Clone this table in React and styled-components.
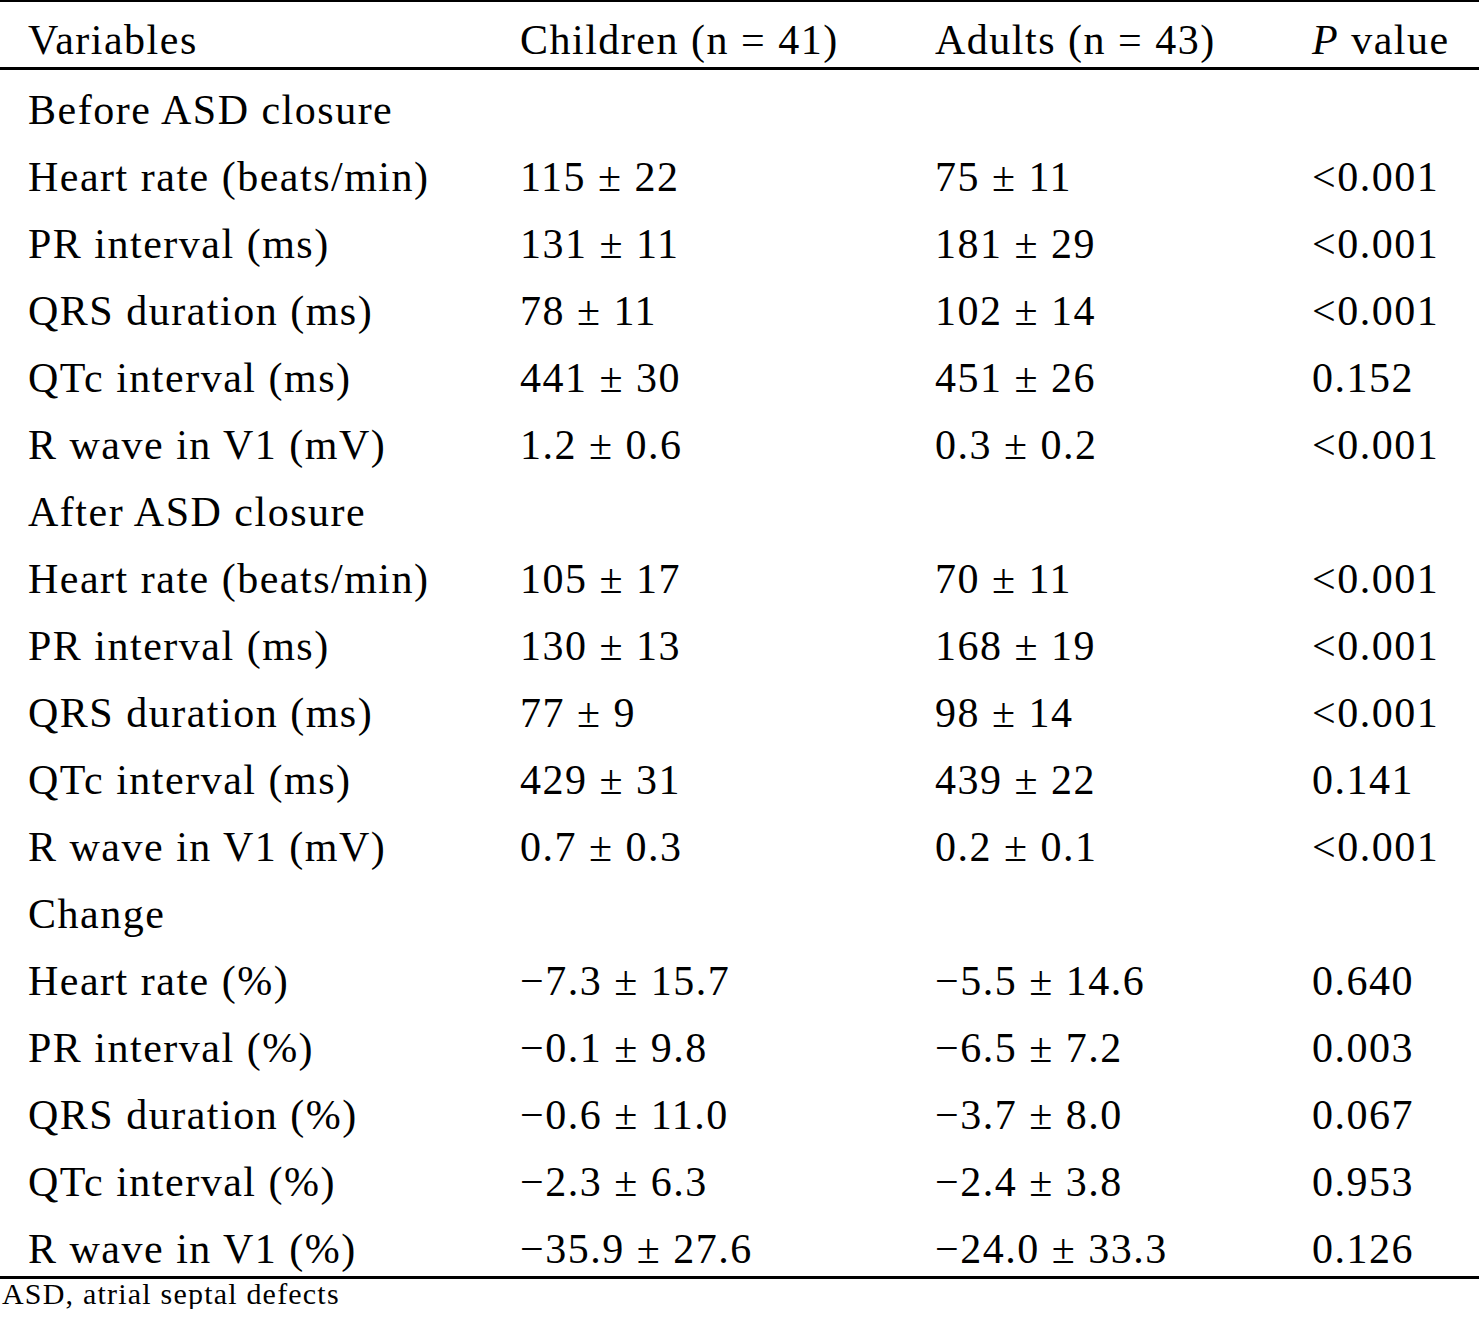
import React from "react";
import styled, { createGlobalStyle } from "styled-components";

const GlobalStyle = createGlobalStyle`
  html, body {
    margin: 0;
    padding: 0;
    background: #fff;
  }
  body {
    font-family: "Liberation Serif", "Times New Roman", serif;
    color: #000;
  }
`;

const Table = styled.div`
  width: 1479px;
  display: grid;
  grid-template-columns: 520px 415px 377px 1fr;
  font-size: 42px;
  letter-spacing: 1.5px;
`;

const HeadRow = styled.div`
  display: contents;
`;

const HeadCell = styled.div`
  border-top: 2px solid #000;
  border-bottom: 3px solid #000;
  padding: 11px 0 0 ${(p) => (p.first ? "28px" : "0")};
  line-height: 54px;
  white-space: nowrap;
`;

const Cell = styled.div`
  box-sizing: border-box;
  padding: 13px 0 0 ${(p) => (p.first ? "28px" : "0")};
  line-height: 54px;
  white-space: nowrap;
  border-bottom: ${(p) => (p.last ? "3px solid #000" : "none")};
  height: ${(p) => (p.last ? "70px" : "67px")};
`;

const Section = styled.div`
  grid-column: 1 / -1;
  height: 67px;
  box-sizing: border-box;
  padding: 13px 0 0 28px;
  line-height: 54px;
`;

const Footnote = styled.div`
  font-size: 30px;
  letter-spacing: 1.2px;
  line-height: 30px;
  padding-left: 2px;
`;

const sections = [
  {
    title: "Before ASD closure",
    rows: [
      ["Heart rate (beats/min)", "115 ± 22", "75 ± 11", "<0.001"],
      ["PR interval (ms)", "131 ± 11", "181 ± 29", "<0.001"],
      ["QRS duration (ms)", "78 ± 11", "102 ± 14", "<0.001"],
      ["QTc interval (ms)", "441 ± 30", "451 ± 26", "0.152"],
      ["R wave in V1 (mV)", "1.2 ± 0.6", "0.3 ± 0.2", "<0.001"],
    ],
  },
  {
    title: "After ASD closure",
    rows: [
      ["Heart rate (beats/min)", "105 ± 17", "70 ± 11", "<0.001"],
      ["PR interval (ms)", "130 ± 13", "168 ± 19", "<0.001"],
      ["QRS duration (ms)", "77 ± 9", "98 ± 14", "<0.001"],
      ["QTc interval (ms)", "429 ± 31", "439 ± 22", "0.141"],
      ["R wave in V1 (mV)", "0.7 ± 0.3", "0.2 ± 0.1", "<0.001"],
    ],
  },
  {
    title: "Change",
    rows: [
      ["Heart rate (%)", "−7.3 ± 15.7", "−5.5 ± 14.6", "0.640"],
      ["PR interval (%)", "−0.1 ± 9.8", "−6.5 ± 7.2", "0.003"],
      ["QRS duration (%)", "−0.6 ± 11.0", "−3.7 ± 8.0", "0.067"],
      ["QTc interval (%)", "−2.3 ± 6.3", "−2.4 ± 3.8", "0.953"],
      ["R wave in V1 (%)", "−35.9 ± 27.6", "−24.0 ± 33.3", "0.126"],
    ],
  },
];

const App = () => {
  return (
    <>
      <GlobalStyle />
      <Table>
        <HeadRow>
          <HeadCell first>Variables</HeadCell>
          <HeadCell>Children (n = 41)</HeadCell>
          <HeadCell>Adults (n = 43)</HeadCell>
          <HeadCell>
            <i>P</i> value
          </HeadCell>
        </HeadRow>
        {sections.map((sec, si) => (
          <React.Fragment key={sec.title}>
            <Section>{sec.title}</Section>
            {sec.rows.map((row, ri) => {
              const last = si === sections.length - 1 && ri === sec.rows.length - 1;
              return row.map((val, ci) => (
                <Cell key={sec.title + ri + ci} first={ci === 0} last={last}>
                  {val}
                </Cell>
              ));
            })}
          </React.Fragment>
        ))}
      </Table>
      <Footnote>ASD, atrial septal defects</Footnote>
    </>
  );
};

export default App;
